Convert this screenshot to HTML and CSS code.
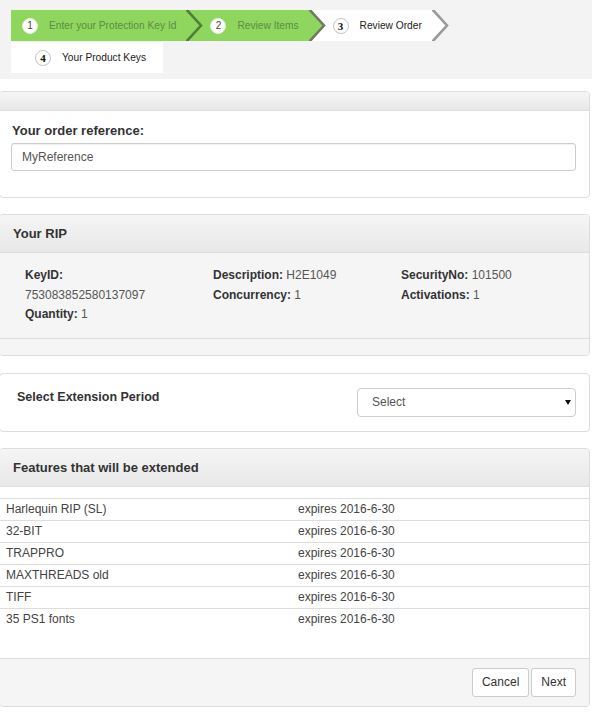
FILE: index.html
```html
<!DOCTYPE html>
<html lang="en">
<head>
    <meta charset="UTF-8">
    <meta name="viewport" content="width=device-width, initial-scale=1.0">
    <title>Extend Protection Key</title>
    <link rel="stylesheet" href="styles.css">
</head>
<body>
    <div class="wizard">
        <ul class="steps">
            <li class="step done first">
                <span class="step-label"><span class="step-num">1</span>Enter your Protection Key Id</span>
                <svg class="chevron" width="17" height="31" viewBox="0 0 17 31">
                    <rect width="17" height="31" fill="#8fd65e"/>
                    <polygon points="0,0 15,15.5 0,31" fill="#8fd65e"/>
                    <polyline points="0,-1 15,15.5 0,32" fill="none" stroke="#4f7f36" stroke-width="2.6"/>
                </svg>
            </li>
            <li class="step done">
                <span class="step-label"><span class="step-num">2</span>Review Items</span>
                <svg class="chevron" width="17" height="31" viewBox="0 0 17 31">
                    <rect width="17" height="31" fill="#ffffff"/>
                    <polygon points="0,0 15,15.5 0,31" fill="#8fd65e"/>
                    <polyline points="0,-1 15,15.5 0,32" fill="none" stroke="#6f7a68" stroke-width="2.6"/>
                </svg>
            </li>
            <li class="step current">
                <span class="step-label"><span class="step-num">3</span>Review Order</span>
                <svg class="chevron" width="17" height="31" viewBox="0 0 17 31">
                    <polygon points="0,0 15,15.5 0,31" fill="#ffffff"/>
                    <polyline points="0,-1 15,15.5 0,32" fill="none" stroke="#999999" stroke-width="2.6"/>
                </svg>
            </li>
            <li class="step todo last">
                <span class="step-label"><span class="step-num">4</span>Your Product Keys</span>
            </li>
        </ul>
    </div>

    <div class="content">
        <div class="panel">
            <div class="panel-heading empty"></div>
            <div class="panel-body order-ref">
                <label for="order-ref">Your order reference:</label>
                <input type="text" id="order-ref" value="MyReference">
            </div>
        </div>

        <div class="panel">
            <div class="panel-heading">Your RIP</div>
            <div class="panel-body rip-info">
                <div class="rip-col">
                    <div><b>KeyID:</b></div>
                    <div>753083852580137097</div>
                    <div><b>Quantity:</b> 1</div>
                </div>
                <div class="rip-col">
                    <div><b>Description:</b> H2E1049</div>
                    <div><b>Concurrency:</b> 1</div>
                </div>
                <div class="rip-col">
                    <div><b>SecurityNo:</b> 101500</div>
                    <div><b>Activations:</b> 1</div>
                </div>
            </div>
            <div class="panel-footer empty"></div>
        </div>

        <div class="panel spaced">
            <div class="panel-body period">
                <span class="period-label">Select Extension Period</span>
                <div class="select-wrap">
                    <select id="period">
                        <option>Select</option>
                    </select>
                </div>
            </div>
        </div>

        <div class="panel">
            <div class="panel-heading">Features that will be extended</div>
            <div class="panel-body features">
                <div class="feature-row"><span>Harlequin RIP (SL)</span><span>expires 2016-6-30</span></div>
                <div class="feature-row"><span>32-BIT</span><span>expires 2016-6-30</span></div>
                <div class="feature-row"><span>TRAPPRO</span><span>expires 2016-6-30</span></div>
                <div class="feature-row"><span>MAXTHREADS old</span><span>expires 2016-6-30</span></div>
                <div class="feature-row"><span>TIFF</span><span>expires 2016-6-30</span></div>
                <div class="feature-row"><span>35 PS1 fonts</span><span>expires 2016-6-30</span></div>
            </div>
            <div class="panel-footer actions">
                <button class="btn">Cancel</button>
                <button class="btn">Next</button>
            </div>
        </div>
    </div>
</body>
</html>
```

FILE: styles.css
```css
:root {
    --step-green: #8fd65e;
    --border-color: #dddddd;
    --muted-bg: #f5f5f5;
    --text-color: #333333;
}

* {
    box-sizing: border-box;
    margin: 0;
    padding: 0;
}

body {
    font-family: "Liberation Sans", Arial, Helvetica, sans-serif;
    font-size: 12px;
    color: var(--text-color);
    background-color: #fff;
}

/* wizard steps */
.wizard {
    background-color: #f3f3f3;
    padding: 10px 11px 6px;
    margin-bottom: 12px;
}

.steps {
    list-style: none;
    display: flex;
    flex-wrap: wrap;
    row-gap: 1px;
}

.step {
    display: flex;
    height: 31px;
}

.step-label {
    display: flex;
    align-items: center;
    padding: 0 10px 0 7px;
    font-size: 10.2px;
    white-space: nowrap;
}

.step.first .step-label {
    padding-left: 11px;
}

.step.last .step-label {
    padding: 0 17px 0 24px;
}

.step.done .step-label {
    background-color: var(--step-green);
    color: #5c8c44;
}

.step.current .step-label,
.step.todo .step-label {
    background-color: #fff;
    color: #222;
}

.step-num {
    display: inline-flex;
    align-items: center;
    justify-content: center;
    width: 16px;
    height: 16px;
    margin-right: 11px;
    border-radius: 50%;
    background-color: #fff;
    font-size: 10px;
}

.step.done .step-num {
    color: #444;
    border: 1px solid #e4f3da;
}

.step.current .step-num,
.step.todo .step-num {
    border: 1px solid #c4c4c4;
    font-family: "Liberation Serif", "Times New Roman", serif;
    font-weight: bold;
    font-size: 11px;
    color: #111;
}

.chevron {
    display: block;
    flex-shrink: 0;
}

/* panels */
.content {
    width: 591px;
    margin-left: -1px;
}

.panel {
    border: 1px solid var(--border-color);
    border-radius: 4px;
    margin-bottom: 16px;
    background-color: #fff;
    overflow: hidden;
}

.panel.spaced {
    margin-top: 17px;
}

.panel-heading {
    background: linear-gradient(#f5f5f5, #e8e8e8);
    border-bottom: 1px solid var(--border-color);
    padding: 10px 13px;
    font-size: 13px;
    line-height: 17px;
    font-weight: bold;
    color: var(--text-color);
}

.panel-heading.empty {
    height: 19px;
    padding: 0;
}

.panel-footer {
    background-color: var(--muted-bg);
    border-top: 1px solid var(--border-color);
}

.panel-footer.empty {
    height: 17px;
}

.order-ref {
    padding: 11px 13px 26px 11px;
}

.order-ref label {
    display: block;
    font-size: 13px;
    font-weight: bold;
    line-height: 18px;
    margin-bottom: 3px;
    padding-left: 1px;
}

.order-ref input {
    display: block;
    width: 100%;
    height: 28px;
    padding: 0 10px;
    border: 1px solid #cccccc;
    border-radius: 3px;
    box-shadow: inset 0 1px 1px rgba(0,0,0,0.06);
    font-family: inherit;
    font-size: 12px;
    color: #555;
}

.rip-info {
    display: grid;
    grid-template-columns: 188px 188px 1fr;
    padding: 13px 0 13px 25px;
    background-color: var(--muted-bg);
    line-height: 19.5px;
    color: #555;
}

.rip-info b {
    color: var(--text-color);
}

.period {
    display: flex;
    justify-content: space-between;
    align-items: flex-start;
    padding: 14px 13px 14px 17px;
}

.period-label {
    font-size: 12.5px;
    font-weight: bold;
    line-height: 18px;
}

.select-wrap {
    position: relative;
    width: 219px;
}

.select-wrap select {
    appearance: none;
    -webkit-appearance: none;
    width: 100%;
    height: 29px;
    padding: 0 14px;
    border: 1px solid #cccccc;
    border-radius: 4px;
    background-color: #fff;
    font-family: inherit;
    font-size: 12px;
    color: #555;
}

/* little caret drawn over the select */
.select-wrap::after {
    content: "";
    position: absolute;
    right: 5px;
    top: 12px;
    border-left: 3px solid transparent;
    border-right: 3px solid transparent;
    border-top: 5px solid #111;
}

.features {
    padding: 11px 0 28px;
}

.feature-row {
    display: grid;
    grid-template-columns: 292px 1fr;
    border-top: 1px solid var(--border-color);
    line-height: 13px;
    color: #444;
}

.feature-row span {
    padding: 4px 6px;
}

.actions {
    display: flex;
    justify-content: flex-end;
    gap: 2px;
    padding: 9px 13px;
}

.btn {
    height: 29px;
    padding: 0 9px;
    background-color: #fff;
    border: 1px solid #cccccc;
    border-radius: 3px;
    font-family: inherit;
    font-size: 12px;
    color: var(--text-color);
    cursor: pointer;
}

.btn:hover {
    background-color: #ebebeb;
}
```
